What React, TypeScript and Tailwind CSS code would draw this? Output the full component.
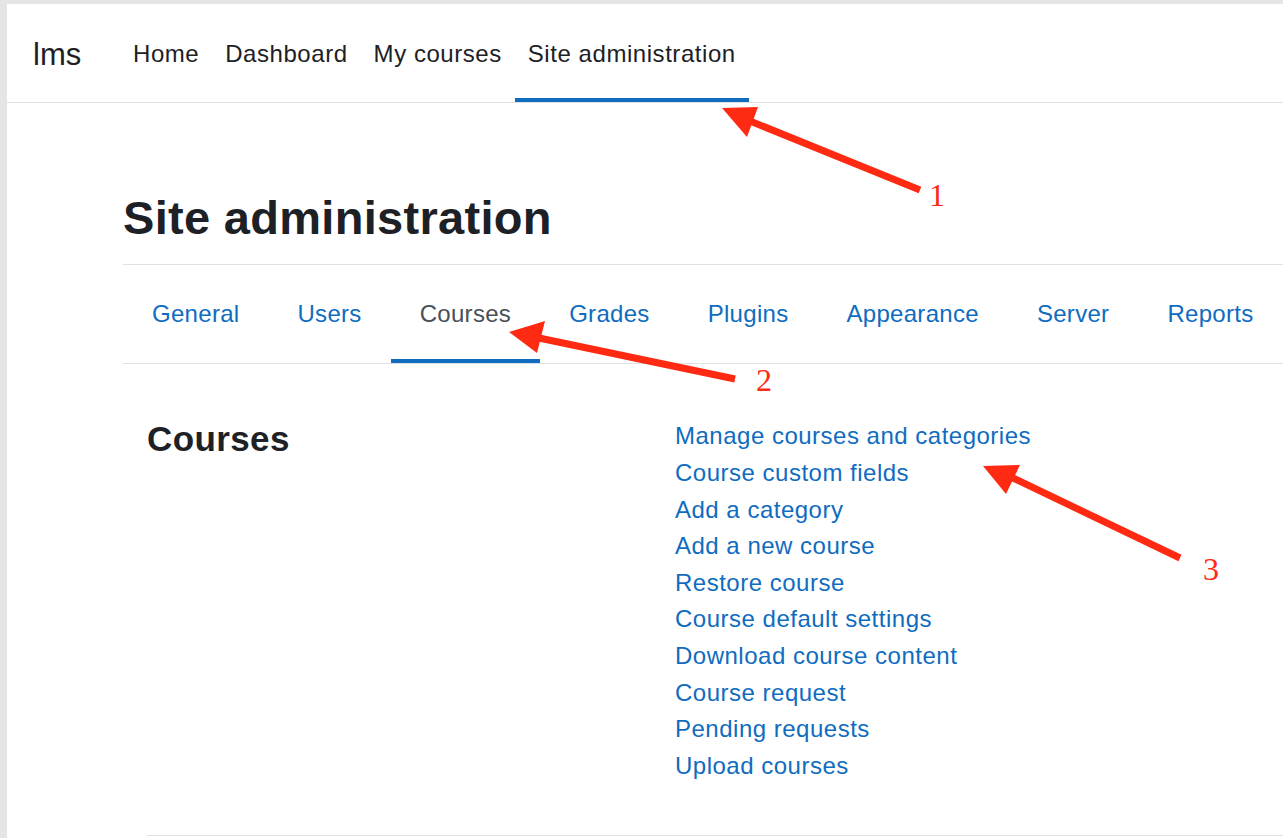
const navItems = ["Home", "Dashboard", "My courses", "Site administration"];

const tabs = ["General", "Users", "Courses", "Grades", "Plugins", "Appearance", "Server", "Reports"];

const courseLinks = [
  "Manage courses and categories",
  "Course custom fields",
  "Add a category",
  "Add a new course",
  "Restore course",
  "Course default settings",
  "Download course content",
  "Course request",
  "Pending requests",
  "Upload courses",
];

// red annotation arrows drawn over the page
const Annotations = () => (
  <svg className="pointer-events-none absolute left-0 top-0" width={1283} height={838}>
    <g fill="#fe2a12" stroke="#fe2a12">
      <line x1={920} y1={190} x2={750} y2={121} strokeWidth={7} />
      <polygon points="722,108 758,107 747,137" stroke="none" />
      <line x1={735} y1={379} x2={539} y2={338} strokeWidth={7} />
      <polygon points="509,332 545,321 537,353" stroke="none" />
      <line x1={1180} y1={558} x2={1011} y2={477} strokeWidth={7} />
      <polygon points="983,466 1020,465 1006,494" stroke="none" />
    </g>
    <g fill="#fe2a12" fontFamily="'Liberation Serif', 'Times New Roman', serif" fontSize={32}>
      <text x={929} y={206}>1</text>
      <text x={756} y={391}>2</text>
      <text x={1203} y={580}>3</text>
    </g>
  </svg>
);

export default function App() {
  return (
    <div className="relative h-screen overflow-hidden bg-[#e5e5e5] pl-[7px] pt-[4px] font-['Liberation_Sans',Arial,sans-serif]">
      <div className="h-full bg-white">
        {/* top navbar */}
        <header className="flex h-[99px] border-b border-[#dee2e6]">
          <div className="flex w-[113px] items-center pl-[26px] pt-[4px] text-[31px] text-[#1d2125]">lms</div>
          <nav className="flex">
            {navItems.map((item) => (
              <a
                key={item}
                className={
                  item === "Site administration"
                    ? "flex items-center border-b-4 border-[#0f6cbf] px-[13px] pt-[5px] text-[24px] tracking-[0.55px] text-[#1d2125]"
                    : "flex items-center border-b-4 border-transparent px-[13px] pt-[5px] text-[24px] tracking-[0.55px] text-[#1d2125]"
                }
              >
                {item}
              </a>
            ))}
          </nav>
        </header>

        <div className="pl-[116px]">
          <h1 className="mb-[18px] mt-[87px] text-[47px] font-bold leading-[1.2] tracking-[0.3px] text-[#1d2125]">
            Site administration
          </h1>

          {/* secondary tabs */}
          <ul className="flex h-[100px] border-y border-[#dee2e6]">
            {tabs.map((tab) => (
              <li
                key={tab}
                className={
                  tab === "Courses"
                    ? "flex items-center border-b-4 border-[#0f6cbf] px-[29px] pt-[3px] text-[24px] tracking-[0.3px] text-[#495057]"
                    : "flex items-center border-b-4 border-transparent px-[29px] pt-[3px] text-[24px] tracking-[0.3px] text-[#0f6cbf]"
                }
              >
                {tab}
              </li>
            ))}
          </ul>

          <div className="ml-[24px] flex border-b border-[#dee2e6] pb-[51px] pt-[54px]">
            <h2 className="w-[528px] text-[35px] font-bold leading-[1.2] tracking-[0.4px] text-[#1d2125]">Courses</h2>
            <div className="flex flex-col text-[24px] leading-[36.6px] tracking-[0.5px] text-[#0f6cbf]">
              {courseLinks.map((l) => (
                <a key={l}>{l}</a>
              ))}
            </div>
          </div>
        </div>
      </div>
      <Annotations />
    </div>
  );
}
